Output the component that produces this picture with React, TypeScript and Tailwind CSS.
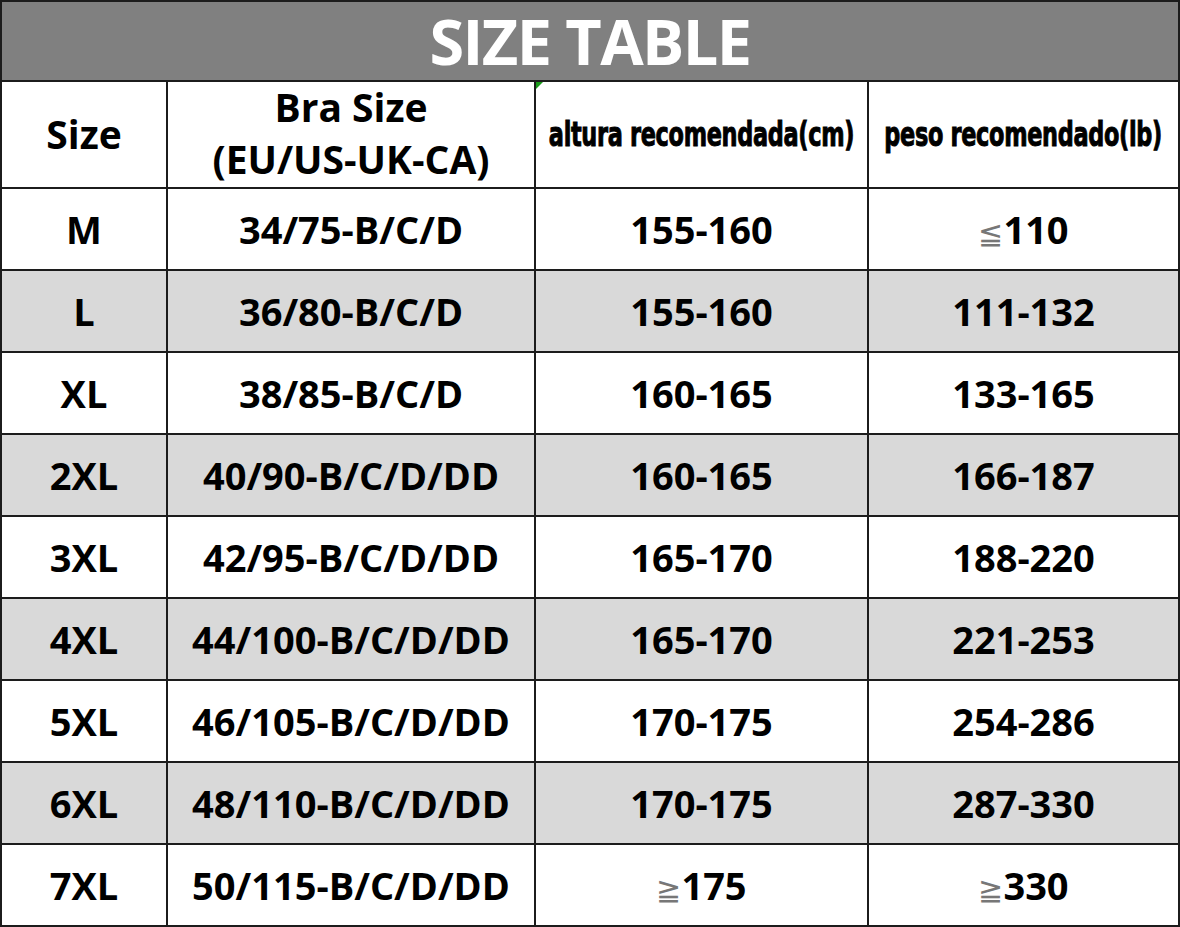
const rows: [string, string, string, string][] = [
  ["M", "34/75-B/C/D", "155-160", "≦110"],
  ["L", "36/80-B/C/D", "155-160", "111-132"],
  ["XL", "38/85-B/C/D", "160-165", "133-165"],
  ["2XL", "40/90-B/C/D/DD", "160-165", "166-187"],
  ["3XL", "42/95-B/C/D/DD", "165-170", "188-220"],
  ["4XL", "44/100-B/C/D/DD", "165-170", "221-253"],
  ["5XL", "46/105-B/C/D/DD", "170-175", "254-286"],
  ["6XL", "48/110-B/C/D/DD", "170-175", "287-330"],
  ["7XL", "50/115-B/C/D/DD", "≧175", "≧330"],
];

const cell =
  "flex items-center justify-center border-r-2 border-b-2 border-[#1c1c1c] font-bold text-black";

// heavy condensed header (the sheet uses an Impact-like face)
const condensed =
  "inline-block shrink-0 whitespace-nowrap text-[33px] font-bold tracking-[-0.5px] scale-x-[0.68] [-webkit-text-stroke:1px_black]";

// values may start with ≦ / ≧, drawn thin and grey like the source sheet
function Value({ text }: { text: string }) {
  const sym = text[0] === "≦" || text[0] === "≧";
  if (!sym) return <span>{text}</span>;
  return (
    <span>
      <span className="font-normal text-[#777] text-[30px]">{text[0]}</span>
      {text.slice(1)}
    </span>
  );
}

export default function App() {
  return (
    <div
      className="w-[1180px] h-[927px] bg-white border-l-2 border-t-2 border-[#1c1c1c] overflow-hidden"
      style={{ fontFamily: '"Open Sans", "Noto Sans", sans-serif' }}
    >
      <div className="h-[80px] flex items-center justify-center bg-[#808080] border-r-2 border-b-2 border-[#1c1c1c]">
        <span className="text-[63px] font-bold text-white tracking-tight leading-[76px]">
          SIZE TABLE
        </span>
      </div>
      <div className="grid grid-cols-[166px_368px_333px_minmax(0,1fr)]">
        <div className={`${cell} h-[107px] text-[39px]`}>Size</div>
        <div className={`${cell} h-[107px] flex-col text-[39px] leading-[52px] pb-1`}>
          <span>Bra Size</span>
          <span>(EU/US-UK-CA)</span>
        </div>
        <div className={`${cell} h-[107px] relative min-w-0`}>
          <div className="absolute left-0 top-0 w-0 h-0 border-t-[7px] border-r-[7px] border-t-[#1a9a1a] border-r-transparent" />
          <span
            className={condensed}
            style={{ fontFamily: '"DejaVu Sans", sans-serif' }}
          >
            altura recomendada(cm)
          </span>
        </div>
        <div className={`${cell} h-[107px] min-w-0`}>
          <span
            className={condensed}
            style={{ fontFamily: '"DejaVu Sans", sans-serif' }}
          >
            peso recomendado(lb)
          </span>
        </div>
        {rows.map((r, i) => {
          const bg = i % 2 === 1 ? "bg-[#d9d9d9]" : "bg-white";
          return r.map((v, j) => (
            <div key={`${i}-${j}`} className={`${cell} ${bg} h-[82px] text-[38px] min-w-0`}>
              <Value text={v} />
            </div>
          ));
        })}
      </div>
    </div>
  );
}
